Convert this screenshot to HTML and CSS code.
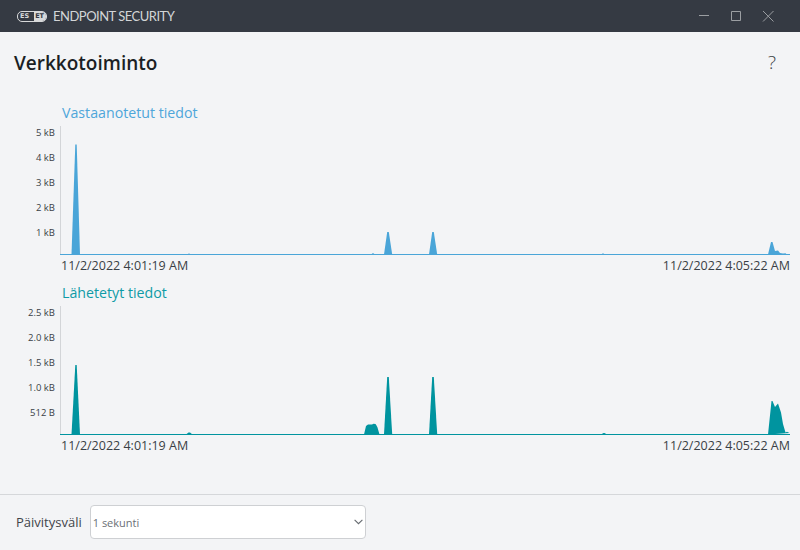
FILE: index.html
```html
<!DOCTYPE html>
<html lang="en">
<head>
  <meta charset="UTF-8">
  <title>ESET Endpoint Security</title>
  <link rel="stylesheet" href="styles.css">
</head>
<body>
  <div class="app">
    <div class="titlebar">
      <div class="logo"><span class="logo-es">ES</span><span class="logo-et">ET</span></div>
      <div class="product">ENDPOINT SECURITY</div>
      <div class="controls">
        <svg width="32" height="32" viewBox="0 0 32 32"><path d="M19 15.500h10"/></svg>
        <svg width="32" height="32" viewBox="0 0 32 32"><path d="M19.500 11.500h9v9h-9z"/></svg>
        <svg width="32" height="32" viewBox="0 0 32 32"><path d="M19 11l10.500 10.500M29.500 11L19 21.500"/></svg>
      </div>
    </div>

    <div class="head">
      <h1>Verkkotoiminto</h1>
      <div class="help">?</div>
    </div>

    <div class="chart blue">
      <h2>Vastaanotetut tiedot</h2>
      <div class="plot-row">
        <div class="y-axis">
          <span>5 kB</span><span>4 kB</span><span>3 kB</span><span>2 kB</span><span>1 kB</span>
        </div>
        <svg class="plot" width="730" height="129" viewBox="0 0 730 129">
          <path class="area" d="M11.500 128.500L15.300 18.500h1.400L20 128.500z"/>
          <path class="area" d="M128 128.500l.5-1h1l.5 1z"/>
          <path class="area" d="M311 128.500l2-1.400 2 1.400z"/>
          <path class="area" d="M324 128.500l3.200-22.500h1.600l3.400 22.500z"/>
          <path class="area" d="M369 128.500l3.200-22.500h1.600l3.400 22.500z"/>
          <path class="area" d="M541 128.500l2-1.200 2 1.200z"/>
          <path class="area" d="M708 128.500l3-12.500h1.500l2.500 9 3-.6 2 2.600 3 .6 2.500-.4 1.500 1.300h2v.5z"/>
          <path class="axis" d="M.5 0V128"/>
          <path class="base" d="M0 128.500h730"/>
        </svg>
      </div>
      <div class="dates"><span>11/2/2022 4:01:19 AM</span><span>11/2/2022 4:05:22 AM</span></div>
    </div>

    <div class="chart teal">
      <h2>Lähetetyt tiedot</h2>
      <div class="plot-row">
        <div class="y-axis">
          <span>2.5 kB</span><span>2.0 kB</span><span>1.5 kB</span><span>1.0 kB</span><span>512 B</span>
        </div>
        <svg class="plot" width="730" height="129" viewBox="0 0 730 129">
          <path class="area" d="M11.500 128.500L15.300 59h1.400L20 128.500z"/>
          <path class="area" d="M126 128.500l2.500-2h1.500l2.500 2z"/>
          <path class="area" d="M304 128.500l2-8.500 2-1.500h4l1.500-.8 2 .4 1 1.500 1 2 2 6.900z"/>
          <path class="area" d="M324 128.500l3.200-57.500h1.600l3.400 57.500z"/>
          <path class="area" d="M369 128.500l3.200-57.500h1.600l3.400 57.500z"/>
          <path class="area" d="M541 128.500l2.500-1.500h1l2.500 1.500z"/>
          <path class="area" d="M708 128.500l3.500-33.500h1l2.500 6 3-3.500 3 9 2 11.500 2.500 8.500 1.500-.8 2.500 1.300z"/>
          <path class="axis" d="M.5 0V128"/>
          <path class="base" d="M0 128.500h730"/>
        </svg>
      </div>
      <div class="dates"><span>11/2/2022 4:01:19 AM</span><span>11/2/2022 4:05:22 AM</span></div>
    </div>

    <div class="footer">
      <label for="interval">Päivitysväli</label>
      <div class="select-wrap">
        <select id="interval"><option>1 sekunti</option></select>
        <svg class="chevron" width="9" height="6" viewBox="0 0 9 6"><path d="M.6.8L4.500 4.700 8.400.8"/></svg>
      </div>
    </div>
  </div>
</body>
</html>
```

FILE: styles.css
```css
* {
  box-sizing: border-box;
}

body {
  margin: 0;
  font-family: 'Open Sans', 'Noto Sans', sans-serif;
  background: #f3f4f6;
  color: #333;
}

.app {
  width: 800px;
  height: 550px;
  display: flex;
  flex-direction: column;
  overflow: hidden;
}

.titlebar {
  height: 32px;
  flex: none;
  display: flex;
  align-items: center;
  padding-left: 17px;
  background: #353a43;
}

.logo {
  width: 30px;
  height: 11px;
  display: flex;
  align-items: center;
  justify-content: space-between;
  padding: 0 0 0 2px;
  border: 1px solid #d8d9da;
  border-radius: 5px;
  overflow: hidden;
  font-family: 'DejaVu Sans', sans-serif;
  font-size: 6.500px;
  font-weight: bold;
  line-height: 9px;
  color: #d8d9da;
}

.logo-et {
  height: 9px;
  padding: 0 2px 0 1px;
  background: #d8d9da;
  color: #353a43;
}

.product {
  margin-left: 6px;
  font-family: 'Lato', sans-serif;
  font-size: 13px;
  letter-spacing: -0.5px;
  color: #d3d5d7;
}

.controls {
  margin-left: auto;
  margin-right: 24px;
  display: flex;
}

.controls svg {
  display: block;
  fill: none;
  stroke: #9b9ea2;
  stroke-width: 1;
}

.head {
  height: 70px;
  display: flex;
  align-items: flex-start;
  justify-content: space-between;
  padding: 18px 24px 0 14px;
}

.head h1 {
  margin: 0;
  font-size: 19px;
  font-weight: 600;
  line-height: 26px;
  color: #1b1f24;
}

.help {
  font-family: 'Open Sans', sans-serif;
  font-size: 19px;
  font-weight: 300;
  line-height: 24px;
  color: #3a3f45;
}

.chart h2 {
  margin: 0 0 2px 62px;
  font-size: 14.200px;
  font-weight: 400;
  line-height: 22px;
}

.blue h2 {
  color: #4ea6da;
}

.teal h2 {
  color: #0f9ba6;
}

.plot-row {
  display: flex;
}

.y-axis {
  width: 55px;
  display: flex;
  flex-direction: column;
  align-items: flex-end;
  gap: 11px;
  margin-right: 5px;
  font-size: 9.500px;
  line-height: 14px;
  color: #3a3f45;
}

.plot {
  display: block;
}

.axis {
  stroke: #d3d5d8;
  fill: none;
}

.base {
  fill: none;
  stroke-width: 1;
}

.blue .area {
  fill: #4aa5d8;
}

.blue .base {
  stroke: #4aa5d8;
}

.teal .area {
  fill: #00949f;
}

.teal .base {
  stroke: #00949f;
}

.dates {
  height: 27px;
  margin-left: 61px;
  width: 729px;
  display: flex;
  justify-content: space-between;
  font-size: 12.500px;
  line-height: 21px;
  color: #3a3f45;
}

.footer {
  height: 56px;
  margin-top: auto;
  display: flex;
  align-items: center;
  padding: 0 0 1px 16px;
  border-top: 1px solid #d5d7da;
  font-size: 13px;
  color: #3f444a;
}

.select-wrap {
  position: relative;
  margin-left: 8px;
}

.select-wrap select {
  display: block;
  width: 276px;
  height: 34px;
  padding: 0 2px;
  appearance: none;
  background: #fff;
  border: 1px solid #ced0d3;
  border-radius: 4px;
  font-family: inherit;
  font-size: 11px;
  color: #6b7076;
}

.chevron {
  position: absolute;
  top: 14px;
  right: 3px;
  fill: none;
  stroke: #666b70;
  stroke-width: 1.100;
}
```
